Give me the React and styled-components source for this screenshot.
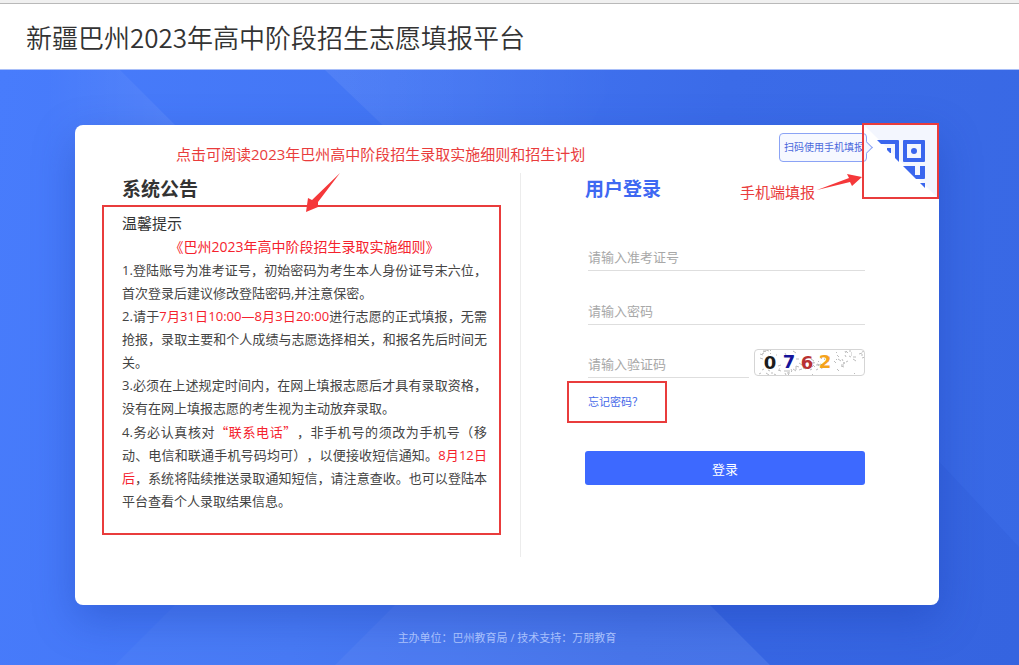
import styled, { createGlobalStyle } from "styled-components";

const GlobalStyle = createGlobalStyle`
  * {
    box-sizing: border-box;
  }
  body {
    margin: 0;
    color: #333;
    font-family: "Open Sans", "Noto Sans CJK SC", sans-serif;
    font-size: 13px;
    text-spacing-trim: space-all;
  }
  input, button {
    font-family: inherit;
  }
`;

const Page = styled.div`
  display: flex;
  flex-direction: column;
  min-height: 100vh;
`;

const TopStrip = styled.div`
  height: 4px;
  background: #f0f0f0;
  border-bottom: 1px solid #b9b9b9;
`;

const Header = styled.header`
  display: flex;
  align-items: center;
  height: 66px;
  padding: 0 26px;
  background: #fff;
  border-bottom: 1px solid #a9bff8;
`;

const SiteTitle = styled.h1`
  margin: 0;
  font-family: "Noto Sans CJK SC", sans-serif;
  font-size: 26px;
  line-height: 36px;
  font-weight: 350;
`;

const Main = styled.main`
  position: relative;
  flex: 1;
  display: flex;
  flex-direction: column;
  padding: 55px 80px 0 75px;
  background: linear-gradient(100deg, #487cfc 0%, #4376f4 35%, #3b6be8 65%, #3868e4 100%);
`;

const Rays = styled.svg`
  position: absolute;
  inset: 0;
  width: 100%;
  height: 100%;
`;

const Card = styled.div`
  position: relative;
  display: grid;
  grid-template-columns: 446px minmax(0, 1fr);
  min-height: 480px;
  padding: 48px 0;
  background: #fff;
  border-radius: 8px;
  box-shadow: 0 14px 40px rgba(22, 58, 170, 0.35);
`;

const Notice = styled.section`
  padding: 0 19px 0 27px;
  border-right: 1px solid #ececec;
`;

const NoticeTitle = styled.h2`
  margin: 0;
  padding-left: 20px;
  font-size: 19px;
  line-height: 32px;
`;

const NoticeBox = styled.div`
  padding: 5px 12px 20px 18px;
  border: 2px solid #e93c3c;
  line-height: 23px;
`;

const Tip = styled.p`
  margin: 0;
  font-size: 15px;
`;

const DocLink = styled.a`
  display: block;
  color: #f5222d;
  font-size: 14px;
  line-height: 24px;
  text-align: center;
  text-decoration: none;
`;

const Rule = styled.p`
  margin: 0;
  color: #444;
  text-align: justify;
`;

const Mark = styled.span`
  color: #f5222d;
`;

// full-width quotation marks
const Quoted = styled(Mark)`
  font-family: "Noto Sans CJK SC", sans-serif;
`;

const Login = styled.section`
  padding: 0 74px 0 64px;
`;

const LoginTitle = styled.h2`
  margin: 0;
  color: #3e68f2;
  font-size: 19px;
  line-height: 32px;
`;

const Form = styled.form`
  display: flex;
  flex-direction: column;
  padding-top: 12px;
`;

const Row = styled.div`
  display: flex;
  align-items: flex-end;
  justify-content: space-between;
  gap: 5px;
  padding: 27px 0 0 3px;
`;

const Field = styled.input`
  flex: 1;
  min-width: 0;
  height: 27px;
  padding: 0;
  border: 0;
  border-bottom: 1px solid #dedede;
  outline: 0;
  background: transparent;
  font-size: 13px;
  &::placeholder {
    color: #a8a8a8;
    opacity: 1;
  }
`;

const CaptchaRow = styled(Row)`
  padding-top: 24px;
`;

const Captcha = styled.svg`
  flex: none;
  width: 111px;
  height: 27px;
  margin-bottom: 2px;
  border: 1px solid #d5d5d5;
  border-radius: 4px;
`;

const ForgotBox = styled.div`
  align-self: flex-start;
  margin: 3px 0 28px -18px;
  padding: 10px 22px 10px 19px;
  border: 2px solid #e93c3c;
`;

const ForgotLink = styled.a`
  color: #4468e8;
  font-size: 11px;
  line-height: 18px;
  display: block;
  text-decoration: none;
`;

const Submit = styled.button`
  height: 34px;
  border: 0;
  border-radius: 3px;
  background: #3d69ff;
  color: #fff;
  font-size: 13px;
`;

const QrCorner = styled.a`
  position: absolute;
  top: -2px;
  right: 0;
  width: 77px;
  height: 76px;
  border: 2px solid #e93c3c;
  svg {
    display: block;
  }
`;

const Bubble = styled.div`
  position: absolute;
  top: 8px;
  right: 72px;
  padding: 0 2px 0 4px;
  border: 1px solid #8ba3f5;
  border-radius: 4px;
  background: #f6f8ff;
  color: #4a68dc;
  font-size: 10px;
  line-height: 27px;
  &::after {
    content: "";
    position: absolute;
    top: 9px;
    right: -5px;
    width: 8px;
    height: 8px;
    border: solid #8ba3f5;
    border-width: 1px 1px 0 0;
    background: #f6f8ff;
    transform: rotate(45deg);
  }
`;

const Note = styled.span`
  position: absolute;
  top: ${(props) => props.$top}px;
  left: ${(props) => props.$left}px;
  color: #e93c3c;
  font-size: 15px;
  line-height: 20px;
  white-space: nowrap;
`;

const Arrow = styled.svg`
  position: absolute;
  top: ${(props) => props.$top}px;
  left: ${(props) => props.$left}px;
  fill: #f5383a;
`;

const Footer = styled.footer`
  position: relative;
  padding: 23px 0 17px;
  color: #a9c0fb;
  font-size: 11px;
  line-height: 20px;
  text-align: center;
`;

const digits = [
  { char: "0", x: 15, y: 19, color: "#1c1c1c" },
  { char: "7", x: 34, y: 18, color: "#14149a" },
  { char: "6", x: 52, y: 19, color: "#b83232" },
  { char: "2", x: 70, y: 18, color: "#f5a31c" },
];

const specks = Array.from({ length: 90 }, (_, i) => ({
  x: (i * 37 + ((i * i) % 11) * 3) % 108,
  y: (i * 17 + ((i * i) % 7) * 2) % 26,
  dx: (i % 3) + 1,
  dy: (i % 4) - 1,
}));

function Background() {
  return (
    <Rays viewBox="0 0 1019 595" preserveAspectRatio="none" aria-hidden="true">
      <defs>
        <linearGradient id="ray">
          <stop offset="0.2" stopColor="#fff" stopOpacity="0" />
          <stop offset="1" stopColor="#fff" stopOpacity="0.1" />
        </linearGradient>
        <linearGradient id="rayBack">
          <stop offset="0" stopColor="#fff" stopOpacity="0.07" />
          <stop offset="1" stopColor="#fff" stopOpacity="0" />
        </linearGradient>
      </defs>
      <path d="M0 0H120L220 100H0Z" fill="url(#ray)" />
      <path d="M325 0H620L560 110H440Z" fill="url(#rayBack)" />
      <path d="M240 470L115 595H335L460 470Z" fill="#fff" fillOpacity="0.03" />
      <path d="M460 470L335 595H770L645 470Z" fill="#fff" fillOpacity="0.07" />
      <path d="M645 470L770 595H1019V477L900 350Z" fill="#1c46c0" fillOpacity="0.1" />
    </Rays>
  );
}

function QrIcon() {
  return (
    <svg width="73" height="72" viewBox="2 2 73 72" aria-hidden="true">
      <defs>
        <clipPath id="fold">
          <path d="M-2 0H77V79Z" />
        </clipPath>
      </defs>
      <path d="M2 2H75V74Z" fill="#f3f6fe" />
      <g clipPath="url(#fold)" fill="#3a66ee">
        <path d="M15 17H36Q37 17 37 18V40H33V21H15Z" />
        <path d="M25 25H29V30H25Z" />
        <path
          d="M42 17H62Q63 17 63 18V38Q63 39 62 39H42Q41 39 41 38V18Q41 17 42 17ZM45 21V35H59V21Z"
          fillRule="evenodd"
        />
        <circle cx="52" cy="28" r="3" />
        <path d="M41 43H53V52H58V43H63V55Q63 56 62 56H41Z" />
        <path d="M57 60H63V66H57Z" />
      </g>
    </svg>
  );
}

function CaptchaImage() {
  return (
    <Captcha viewBox="0 0 109 25" role="img" aria-label="验证码">
      {specks.map((s, i) => (
        <path key={i} d={`M${s.x} ${s.y}l${s.dx} ${s.dy}`} stroke="#bdbdbd" />
      ))}
      {digits.map((d) => (
        <text
          key={d.char}
          x={d.x}
          y={d.y}
          fill={d.color}
          fontFamily="DejaVu Sans"
          fontSize="18"
          fontWeight="700"
          textAnchor="middle"
        >
          {d.char}
        </text>
      ))}
    </Captcha>
  );
}

export default function App() {
  return (
    <Page lang="zh-CN">
      <GlobalStyle />
      <TopStrip />
      <Header>
        <SiteTitle>新疆巴州2023年高中阶段招生志愿填报平台</SiteTitle>
      </Header>
      <Main>
        <Background />
        <Card>
          <Notice>
            <NoticeTitle>系统公告</NoticeTitle>
            <NoticeBox>
              <Tip>温馨提示</Tip>
              <DocLink href="#rules">《巴州2023年高中阶段招生录取实施细则》</DocLink>
              <Rule>
                1.登陆账号为准考证号，初始密码为考生本人身份证号末六位，首次登录后建议修改登陆密码,并注意保密。
              </Rule>
              <Rule>
                2.请于<Mark>7月31日10:00—8月3日20:00</Mark>
                进行志愿的正式填报，无需抢报，录取主要和个人成绩与志愿选择相关，和报名先后时间无关。
              </Rule>
              <Rule>
                3.必须在上述规定时间内，在网上填报志愿后才具有录取资格，没有在网上填报志愿的考生视为主动放弃录取。
              </Rule>
              <Rule>
                4.务必认真核对<Quoted>“联系电话”</Quoted>
                ，非手机号的须改为手机号（移动、电信和联通手机号码均可），以便接收短信通知。
                <Mark>8月12日后</Mark>
                ，系统将陆续推送录取通知短信，请注意查收。也可以登陆本平台查看个人录取结果信息。
              </Rule>
            </NoticeBox>
          </Notice>
          <Login>
            <LoginTitle>用户登录</LoginTitle>
            <Form>
              <Row>
                <Field type="text" aria-label="准考证号" placeholder="请输入准考证号" />
              </Row>
              <Row>
                <Field type="password" aria-label="密码" placeholder="请输入密码" />
              </Row>
              <CaptchaRow>
                <Field type="text" aria-label="验证码" placeholder="请输入验证码" />
                <CaptchaImage />
              </CaptchaRow>
              <ForgotBox>
                <ForgotLink href="#forgot">忘记密码？</ForgotLink>
              </ForgotBox>
              <Submit type="button">登录</Submit>
            </Form>
          </Login>
          <Bubble>扫码使用手机填报</Bubble>
          <QrCorner href="#mobile" aria-label="手机端填报">
            <QrIcon />
          </QrCorner>
          <Note $top={19} $left={101}>
            点击可阅读2023年巴州高中阶段招生录取实施细则和招生计划
          </Note>
          <Arrow $top={48} $left={230} width="36" height="40" viewBox="0 0 36 40">
            <path d="M35 0L13 29L13 34L1 39L3 25L7 27Z" />
          </Arrow>
          <Note $top={57} $left={665}>
            手机端填报
          </Note>
          <Arrow $top={48} $left={741} width="46" height="20" viewBox="0 0 46 20">
            <path d="M1 17L33 5L31 1L46 4L36 13L34 9Z" />
          </Arrow>
        </Card>
        <Footer>主办单位：巴州教育局 / 技术支持：万朋教育</Footer>
      </Main>
    </Page>
  );
}
